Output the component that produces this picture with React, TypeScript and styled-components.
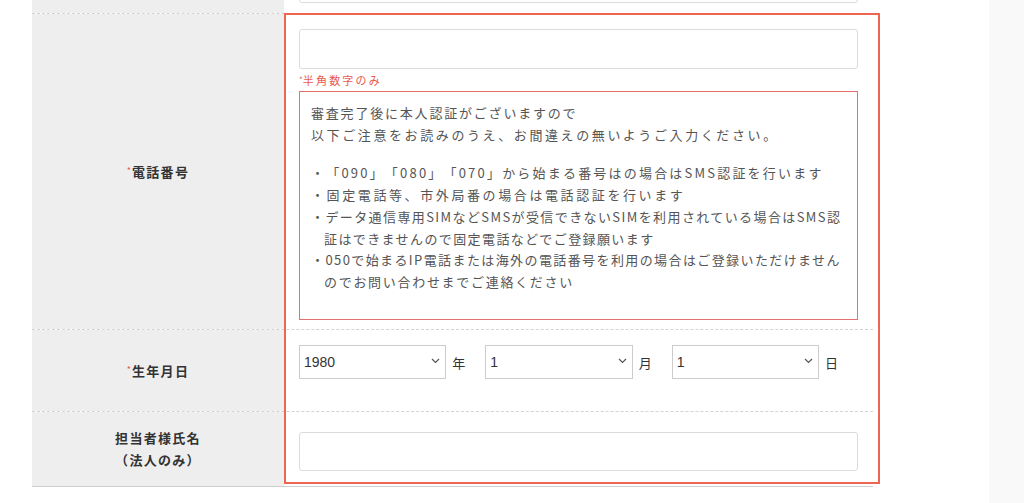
import React from "react";
import styled, { createGlobalStyle } from "styled-components";

const GlobalStyle = createGlobalStyle`
  html, body {
    margin: 0;
    padding: 0;
    background: #ffffff;
    overflow: hidden;
  }
  body {
    font-family: "Noto Sans CJK JP", "Noto Sans", sans-serif;
    color: #333333;
    text-spacing-trim: space-all;
  }
`;

const Page = styled.div`
  display: flex;
  height: 100vh;
  overflow: hidden;
`;

const Main = styled.main`
  flex: 0 0 989px;
  padding-left: 32px;
  box-sizing: border-box;
  background: #ffffff;
`;

const Side = styled.aside`
  flex: 1;
  background: #f9f9f9;
`;

const Table = styled.div`
  position: relative;
  width: 841px;
  margin-top: -52px;
  border-bottom: 1px solid #cfcfcf;
`;

const Row = styled.div`
  display: grid;
  grid-template-columns: 252px minmax(0, 1fr);
  & + & {
    border-top: 1px dashed #d4d4d4;
  }
`;

const LabelCell = styled.div`
  background: #eeeeee;
  display: flex;
  align-items: center;
  justify-content: center;
  text-align: center;
  font-size: 13px;
  font-weight: 700;
  letter-spacing: 0.1em;
  line-height: 22px;
  color: #333333;
`;

const Req = styled.span`
  color: #e85a4f;
  font-size: 9px;
  font-weight: 400;
  vertical-align: 3px;
  margin-right: 1px;
  letter-spacing: 0;
`;

const ValueCell = styled.div<{ $pt: number; $pb: number }>`
  padding: ${({ $pt }) => $pt}px 15px ${({ $pb }) => $pb}px;
  background: #ffffff;
`;

const TextInput = styled.input<{ $h?: number }>`
  display: block;
  width: 100%;
  height: ${({ $h }) => $h ?? 40}px;
  box-sizing: border-box;
  border: 1px solid #dcdcdc;
  border-radius: 3px;
  background: #ffffff;
  padding: 0 10px;
  font-size: 14px;
  outline: none;
`;

const Note = styled.div`
  margin-top: 3px;
  font-size: 11px;
  line-height: 16px;
  letter-spacing: 0.2em;
  color: #e85a4f;
`;

const NoteMark = styled.span`
  font-size: 8px;
  vertical-align: 2px;
  letter-spacing: 0;
`;

// 注意事項ボックス（行ごとに字間を調整して折り返し位置を合わせる）
const Notice = styled.div`
  margin-top: 3px;
  height: 229px;
  box-sizing: border-box;
  border: 1px solid #e47070;
  padding: 10px 11px;
  font-size: 13px;
  line-height: 21.7px;
  color: #555555;
  white-space: nowrap;
  overflow: hidden;
`;

const Para = styled.div`
  margin: 0 0 17px;
`;

const Line = styled.div<{ $ls: number; $cont?: boolean }>`
  letter-spacing: ${({ $ls }) => $ls}px;
  text-indent: ${({ $cont }) => ($cont ? "0" : "inherit")};
`;

const Bullets = styled.ul`
  list-style: none;
  margin: 0;
  padding: 0;
`;

const Bullet = styled.li`
  padding-left: 13px;
  text-indent: -13px;
`;

const DateRow = styled.div`
  display: flex;
  align-items: center;
`;

const SelectWrap = styled.div`
  position: relative;
  width: 148px;
  height: 34px;
`;

const Select = styled.select`
  appearance: none;
  -webkit-appearance: none;
  width: 100%;
  height: 100%;
  box-sizing: border-box;
  border: 1px solid #cccccc;
  border-radius: 0;
  background: #ffffff;
  padding: 0 20px 0 4px;
  font-family: "Liberation Sans", Arial, sans-serif;
  font-size: 14px;
  color: #333333;
  outline: none;
`;

const Chevron = styled.svg`
  position: absolute;
  right: 6px;
  top: 13px;
  pointer-events: none;
`;

const Unit = styled.span`
  margin: 0 20px 0 6px;
  font-size: 13px;
  color: #333333;
`;

// 確認用の赤枠（表の上に重ねる）
const Highlight = styled.div`
  position: absolute;
  left: 252px;
  top: 65px;
  width: 596px;
  height: 471px;
  box-sizing: border-box;
  border: 2px solid #ee6652;
  pointer-events: none;
`;

const years = ["1980"];
const nums = ["1"];

function DateSelect({ options, unit }: { options: string[]; unit: string }) {
  return (
    <>
      <SelectWrap>
        <Select defaultValue={options[0]}>
          {options.map((o) => (
            <option key={o} value={o}>
              {o}
            </option>
          ))}
        </Select>
        <Chevron width="9" height="6" viewBox="0 0 9 6">
          <polyline points="1,1 4.5,4.5 8,1" fill="none" stroke="#555" strokeWidth="1.2" />
        </Chevron>
      </SelectWrap>
      <Unit>{unit}</Unit>
    </>
  );
}

export default function App() {
  return (
    <>
      <GlobalStyle />
      <Page>
        <Main>
          <Table>
            <Row>
              <LabelCell />
              <ValueCell $pt={15} $pb={10}>
                <TextInput type="text" />
              </ValueCell>
            </Row>
            <Row>
              <LabelCell>
                <span>
                  <Req>*</Req>電話番号
                </span>
              </LabelCell>
              <ValueCell $pt={15} $pb={9}>
                <TextInput type="tel" />
                <Note>
                  <NoteMark>*</NoteMark>半角数字のみ
                </Note>
                <Notice>
                  <Para>
                    <Line $ls={1.8}>審査完了後に本人認証がございますので</Line>
                    <Line $ls={2.6}>以下ご注意をお読みのうえ、お間違えの無いようご入力ください。</Line>
                  </Para>
                  <Bullets>
                    <Bullet>
                      <Line $ls={2.2}>・「090」「080」「070」から始まる番号はの場合はSMS認証を行います</Line>
                    </Bullet>
                    <Bullet>
                      <Line $ls={2.6}>・固定電話等、市外局番の場合は電話認証を行います</Line>
                    </Bullet>
                    <Bullet>
                      <Line $ls={1.4}>・データ通信専用SIMなどSMSが受信できないSIMを利用されている場合はSMS認</Line>
                      <Line $ls={1.4} $cont>
                        証はできませんので固定電話などでご登録願います
                      </Line>
                    </Bullet>
                    <Bullet>
                      <Line $ls={1.4}>・050で始まるIP電話または海外の電話番号を利用の場合はご登録いただけません</Line>
                      <Line $ls={1.7} $cont>
                        のでお問い合わせまでご連絡ください
                      </Line>
                    </Bullet>
                  </Bullets>
                </Notice>
              </ValueCell>
            </Row>
            <Row>
              <LabelCell>
                <span>
                  <Req>*</Req>生年月日
                </span>
              </LabelCell>
              <ValueCell $pt={15} $pb={32}>
                <DateRow>
                  <DateSelect options={years} unit="年" />
                  <DateSelect options={nums} unit="月" />
                  <DateSelect options={nums} unit="日" />
                </DateRow>
              </ValueCell>
            </Row>
            <Row>
              <LabelCell>
                <span>
                  担当者様氏名
                  <br />
                  （法人のみ）
                </span>
              </LabelCell>
              <ValueCell $pt={20} $pb={15}>
                <TextInput type="text" $h={39} />
              </ValueCell>
            </Row>
            <Highlight />
          </Table>
        </Main>
        <Side />
      </Page>
    </>
  );
}
